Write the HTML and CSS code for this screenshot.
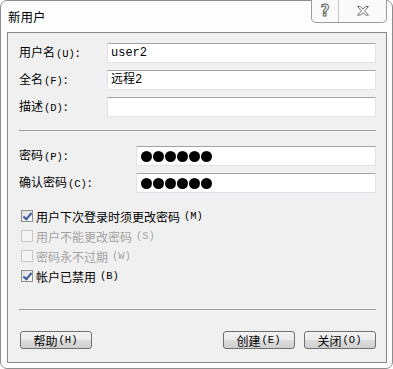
FILE: index.html
```html
<!DOCTYPE html>
<html lang="zh-CN">
<head>
    <meta charset="UTF-8">
    <meta name="viewport" content="width=device-width, initial-scale=1.0">
    <title>新用户</title>
    <link rel="stylesheet" href="styles.css">
</head>
<body>
    <div class="window">
        <div class="titlebar">
            <span class="title">新用户</span>
            <div class="caption-buttons">
                <span class="cap-btn help">?</span>
                <span class="cap-btn close">
                    <svg width="14" height="12" viewBox="0 0 14 12">
                        <path d="M1.5 1.5h3l2.5 2.6 2.5-2.6h3l-4 4.3 4 4.3h-3l-2.5-2.6-2.5 2.6h-3l4-4.3z" fill="#fff" stroke="#6f6f6f" stroke-width="1"/>
                    </svg>
                </span>
            </div>
        </div>

        <div class="client">
            <div class="form-grid names">
                <label>用户名<span class="key">(U)</span>:</label>
                <div class="field mono">user2</div>

                <label>全名<span class="key">(F)</span>:</label>
                <div class="field mono">远程2</div>

                <label>描述<span class="key">(D)</span>:</label>
                <div class="field"></div>
            </div>

            <hr class="sep">

            <div class="form-grid passwords">
                <label>密码<span class="key">(P)</span>:</label>
                <div class="field dots"><i></i><i></i><i></i><i></i><i></i><i></i></div>

                <label>确认密码<span class="key">(C)</span>:</label>
                <div class="field dots"><i></i><i></i><i></i><i></i><i></i><i></i></div>
            </div>

            <div class="checks">
                <div class="check checked"><span class="box"></span>用户下次登录时须更改密码<span class="key">(M)</span></div>
                <div class="check disabled"><span class="box"></span>用户不能更改密码<span class="key">(S)</span></div>
                <div class="check disabled"><span class="box"></span>密码永不过期<span class="key">(W)</span></div>
                <div class="check checked"><span class="box"></span>帐户已禁用<span class="key">(B)</span></div>
            </div>

            <hr class="sep bottom-sep">

            <div class="actions">
                <button class="btn">帮助<span class="key">(H)</span></button>
                <div class="right-btns">
                    <button class="btn">创建<span class="key">(E)</span></button>
                    <button class="btn">关闭<span class="key">(O)</span></button>
                </div>
            </div>
        </div>
    </div>
</body>
</html>
```

FILE: styles.css
```css
* {
    box-sizing: border-box;
}

body {
    margin: 0;
    background: #fff;
    font-family: "Noto Sans CJK SC", "DejaVu Sans", sans-serif;
    font-size: 12px;
    color: #000;
}

.window {
    width: 393px;
    height: 369px;
    border: 1px solid #8e8e8e;
    border-radius: 7px;
    background: #fdfdfd;
    display: flex;
    flex-direction: column;
}

.titlebar {
    height: 31px;
    display: flex;
    justify-content: space-between;
    align-items: flex-start;
    padding-left: 7px;
}

.title {
    margin-top: 7px;
    font-size: 12.5px;
    line-height: 18px;
}

.caption-buttons {
    display: flex;
    margin-right: 5px;
    margin-top: -1px;
    height: 23px;
    border: 1px solid #9c9c9c;
    border-top: none;
    border-radius: 0 0 5px 5px;
    background: #fafafa;
}

.cap-btn {
    display: flex;
    align-items: center;
    justify-content: center;
    height: 100%;
}

.cap-btn.help {
    width: 27px;
    border-right: 1px solid #c4c4c4;
    font-family: "DejaVu Sans", sans-serif;
    font-size: 15px;
    color: #fff;
    -webkit-text-stroke: 1px #666;
    font-weight: bold;
}

.cap-btn.close {
    width: 47px;
}

.client {
    margin: 0 5px 5px 6px;
    height: 331px;
    border: 1px solid #888;
    background: #f0f0f0;
    padding: 10px 10px 0 11px;
}

.form-grid {
    display: grid;
    grid-auto-rows: 20px;
    row-gap: 7px;
    align-items: center;
}

.names {
    grid-template-columns: 88px 1fr;
}

.passwords {
    grid-template-columns: 117px 1fr;
}

label {
    line-height: 20px;
    white-space: nowrap;
}

.key {
    font-family: "Liberation Mono", monospace;
    font-size: 10.5px;
    margin-left: 1px;
    margin-right: 1px;
}

.field {
    height: 20px;
    background: #fff;
    border: 1px solid #e2e3ea;
    border-top-color: #a4a4a4;
    padding: 0 3px;
    line-height: 18px;
    display: flex;
    align-items: center;
}

.mono {
    font-family: "Liberation Mono", "Noto Sans CJK SC", monospace;
    font-size: 12px;
}

.dots {
    gap: 1px;
    padding-left: 4px;
}

.dots i {
    width: 11px;
    height: 11px;
    border-radius: 50%;
    background: #000;
}

.sep {
    margin: 13px 0 0;
    border: none;
    border-top: 1px solid #a0a0a0;
    height: 0;
    margin-bottom: 15px;
}

.checks {
    margin-top: 13px;
    display: flex;
    flex-direction: column;
}

.check {
    height: 20px;
    display: flex;
    align-items: center;
    gap: 3px;
    padding-left: 2px;
}

.box {
    width: 12px;
    height: 12px;
    border: 1px solid #8e8f8f;
    background: linear-gradient(135deg, #dcdcdc, #fbfbfb);
    position: relative;
}

.check.checked .box::after {
    content: "";
    position: absolute;
    left: 3px;
    top: 0;
    width: 3px;
    height: 7px;
    border: solid #3d5a99;
    border-width: 0 2px 2px 0;
    transform: rotate(40deg);
}

.check.disabled {
    color: #a3a3a3;
}

.check.disabled .box {
    border-color: #c8c8c8;
    background: #f4f4f4;
}

.bottom-sep {
    margin-top: 23px;
    margin-bottom: 21px;
}

.actions {
    display: flex;
    justify-content: space-between;
    padding-left: 1px;
}

.right-btns {
    display: flex;
    gap: 9px;
}

.btn {
    width: 72px;
    height: 18px;
    padding: 0;
    font-family: inherit;
    font-size: 12px;
    color: #000;
    border: 1px solid #707070;
    border-radius: 3px;
    background: linear-gradient(#f2f2f2 0%, #ebebeb 50%, #dddddd 51%, #cfcfcf 100%);
    display: flex;
    align-items: center;
    justify-content: center;
}
```
